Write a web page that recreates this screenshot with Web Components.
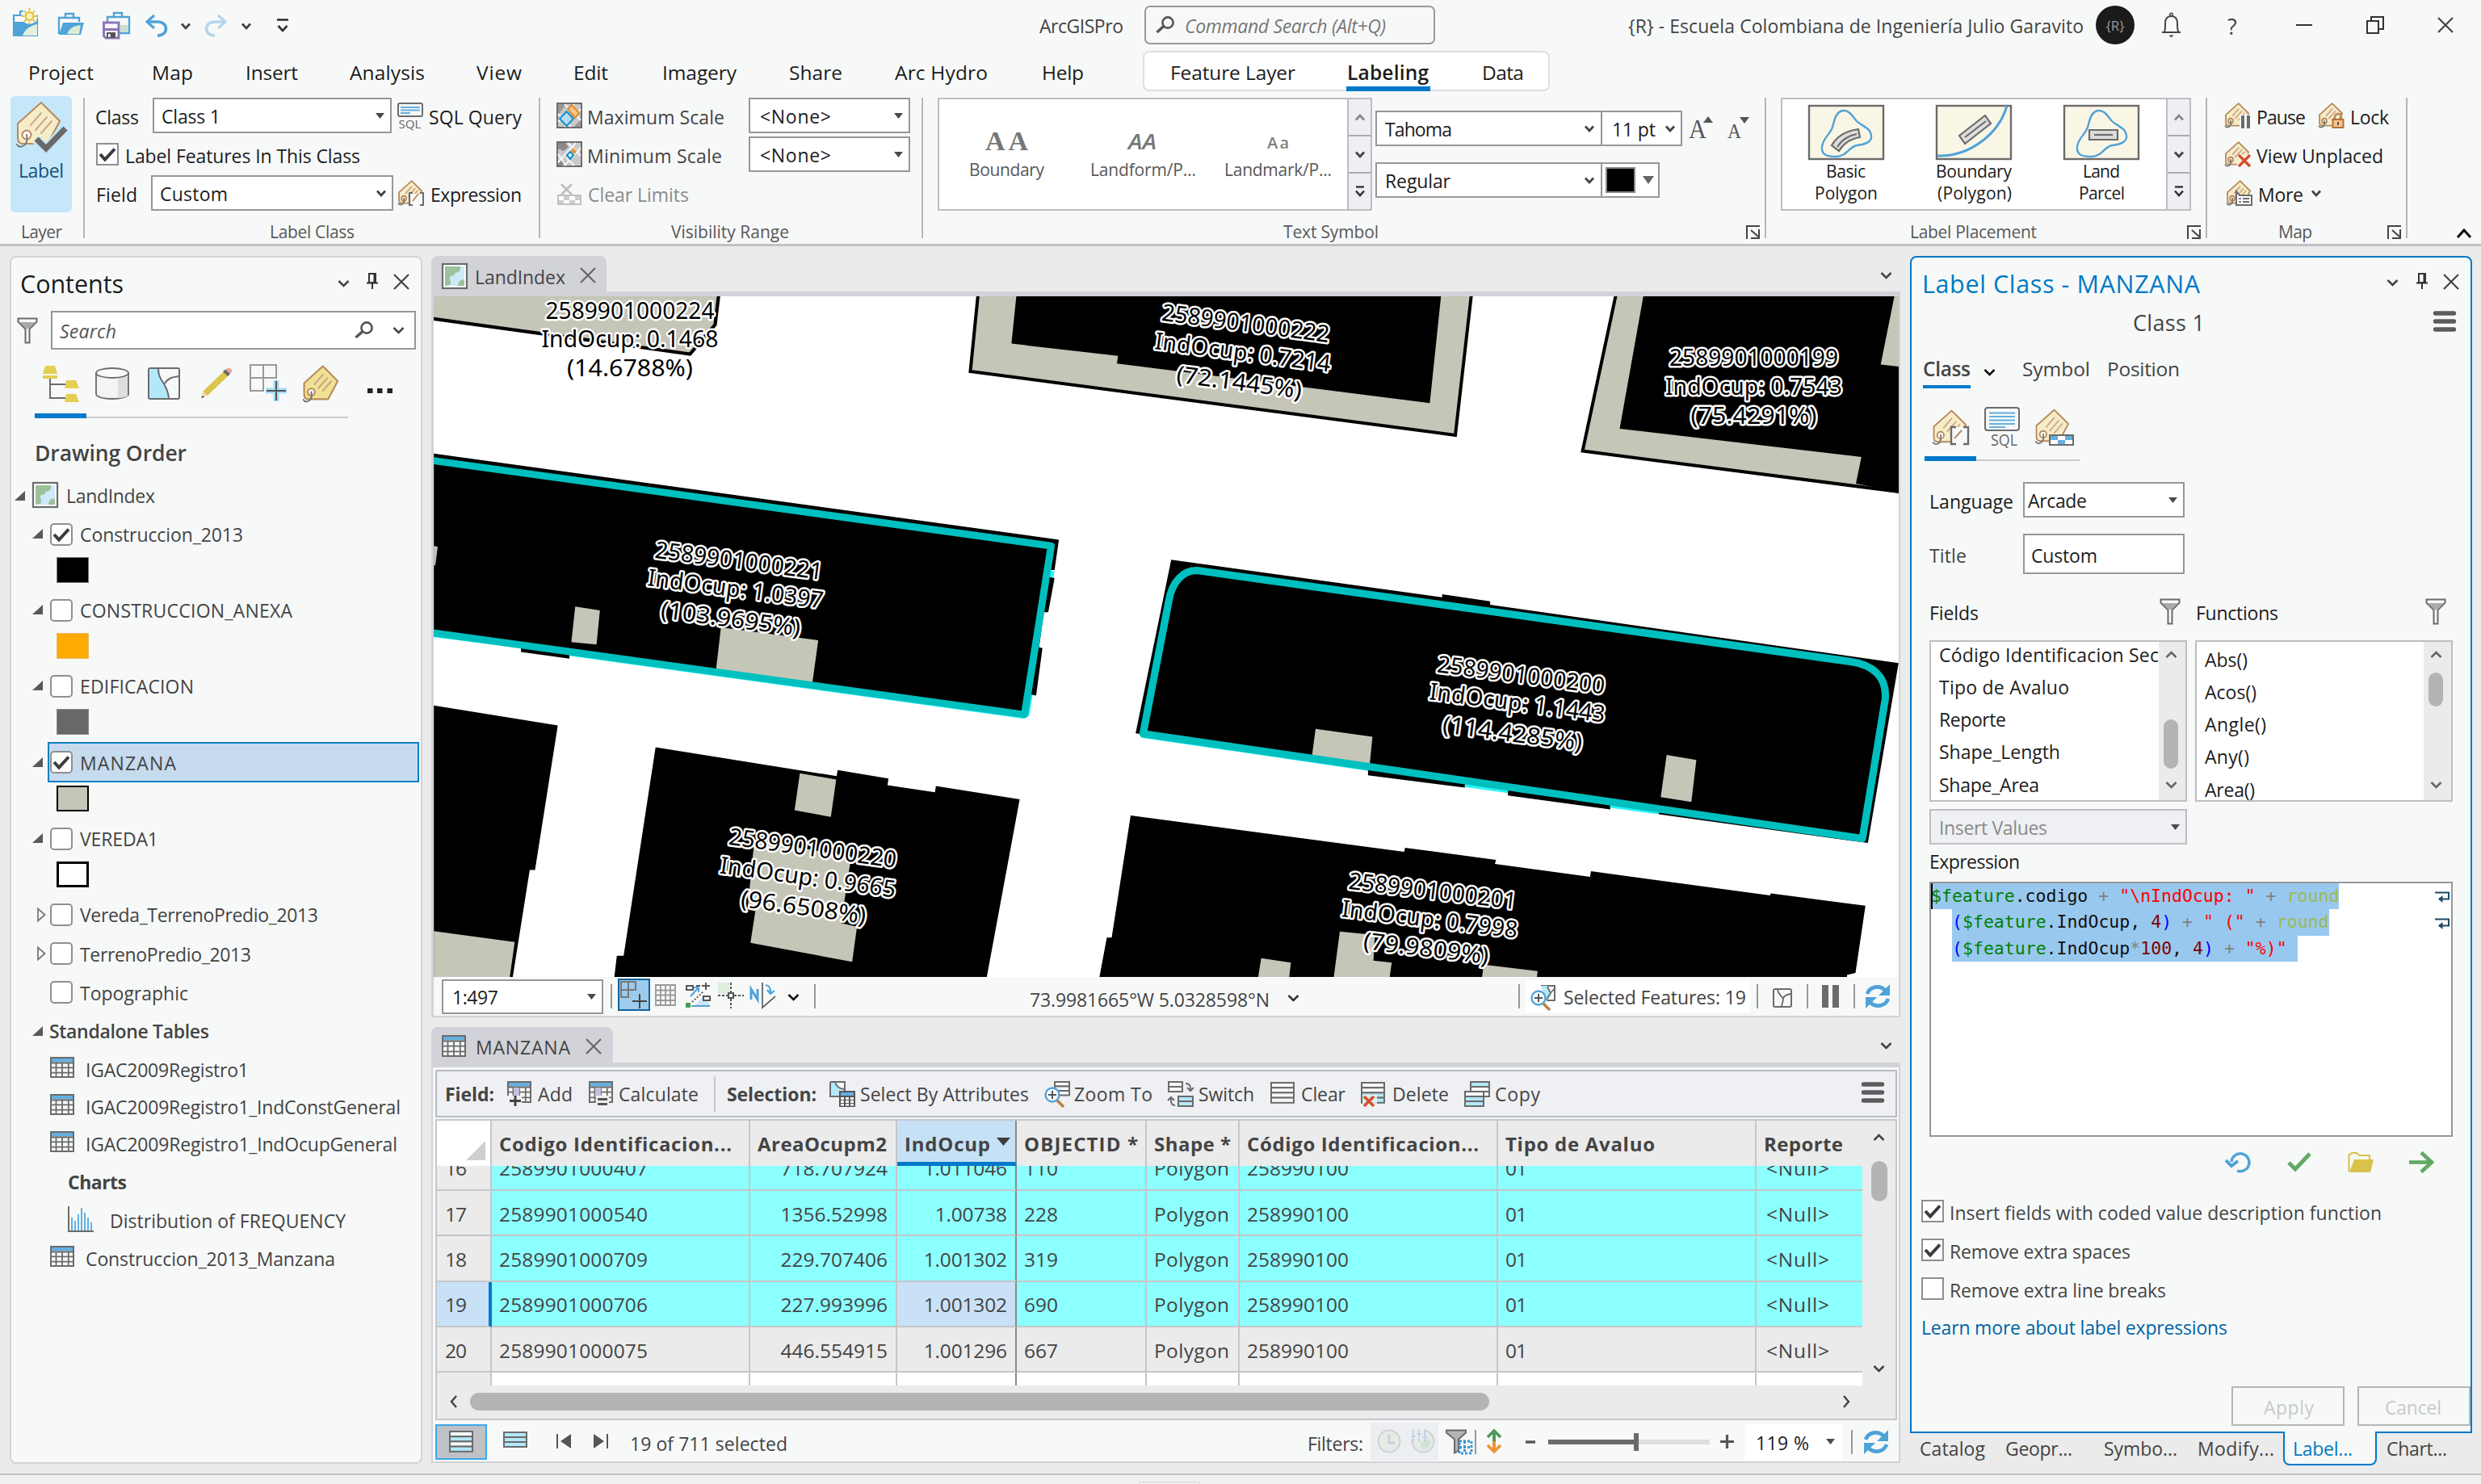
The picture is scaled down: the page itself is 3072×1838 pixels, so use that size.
<!DOCTYPE html>
<html lang="en">
<head>
<meta charset="utf-8">
<title>ArcGISPro</title>
<style>
html,body{margin:0;padding:0;width:3072px;height:1838px;overflow:hidden;background:#ebebeb}
body{font-family:"Open Sans","Noto Sans",sans-serif;font-size:23px;color:#444}
</style>
</head>
<body>
<app-window></app-window>
<script>
const G='#6b6b6b', B='#4fa3d8';
const tag=(s,sw=2,fill='#f5edc8')=>`<g transform="scale(${s})" fill="none" stroke-width="${sw}" stroke-linejoin="round" stroke-linecap="round"><path d="M31 2L54 25L39 53H9Q2 53 2 46V28Z" fill="${fill}" stroke="#b98a5c"/><path d="M18 30L31 15M24 36L38 20M31 40L44 25" stroke="#cfa888"/><circle cx="13" cy="42" r="5.5" fill="#fff" stroke="#b98a5c"/><path d="M13 42q2 9-3 13q-6 4-9-1" stroke="#777"/></g>`;
const table=(w,h)=>`<rect x="1" y="1" width="${w-2}" height="${h-2}" fill="#f7f9f9" stroke="${G}" stroke-width="2"/><rect x="2" y="2" width="${w-4}" height="4.5" fill="#64afe0"/><path d="M1 7.5H${w-1}M1 ${7+(h-7)/3}H${w-1}M1 ${7+(h-7)*2/3}H${w-1}M${w*.25} 7V${h}M${w*.5} 7V${h}M${w*.76} 7V${h}" stroke="${G}" stroke-width="1.8"/>`;
const rows=(x,y,w,n,fills,p=6.5)=>{let s='';for(let i=0;i<n;i++)s+=`<rect x="${x+1}" y="${y+1+i*p}" width="${w-2}" height="${p}" fill="${fills[i]||'#f7f9f9'}" stroke="${G}" stroke-width="2"/>`;return s};
const bag=(x)=>`<path d="M${x} 9h29v25h-29zM${x+8} 9V4h11v5" fill="none" stroke="${B}" stroke-width="2.2"/>`;
const refresh=`<g fill="none" stroke="${B}" stroke-width="4.6"><path d="M3 13C6 4 18 1 26 9"/><path d="M29 19C26 28 14 31 6 23"/></g><path d="M31 1V15H17ZM1 31V17H15Z" fill="${B}"/>`;
const funnel=`<path d="M1.5 1.5h23v4l-9 9v17h-5v-17l-9-9z" fill="#f7f9f9" stroke="${G}" stroke-width="2"/><path d="M3 6h20l-8 8h-4z" fill="#aaa"/>`;
const lens=(x,y)=>`<circle cx="${x}" cy="${y}" r="8.5" fill="#f7fbff" stroke="#4fa3d8" stroke-width="2.4"/><path d="M${x-5} ${y}h10M${x} ${y-5}v10" stroke="#555" stroke-width="2"/><path d="M${x+6} ${y+7}l8 8" stroke="#b98048" stroke-width="3.6"/>`;
const blob='M44 7C36 7 33 15 31 24C29 36 18 40 17 52C16 62 24 64 34 64C48 64 50 52 60 50C70 49 79 46 78 38C77 28 66 26 60 20C54 13 51 7 44 7Z';
const ICONS={
 chev:[15,10,`<path d="M1.5 2L7.5 8L13.5 2" fill="none" stroke="currentColor" stroke-width="2.6"/>`],
 up:[15,10,`<path d="M1.5 8L7.5 2L13.5 8" fill="none" stroke="currentColor" stroke-width="2.6"/>`],
 chevs:[12,9,`<path d="M1 1.5L6 7L11 1.5" fill="none" stroke="currentColor" stroke-width="2.8"/>`],
 ups:[12,9,`<path d="M1 7.5L6 2L11 7.5" fill="none" stroke="currentColor" stroke-width="2.8"/>`],
 left:[10,16,`<path d="M8 1L2 8L8 15" fill="none" stroke="currentColor" stroke-width="2.4"/>`],
 right:[10,16,`<path d="M2 1L8 8L2 15" fill="none" stroke="currentColor" stroke-width="2.4"/>`],
 caret:[20,12,`<path d="M2 11L10 2L18 11" fill="none" stroke="#111" stroke-width="3"/>`],
 tri:[11,7,`<path d="M0 0H11L5.5 7Z" fill="#4a4a4a"/>`],
 bigtri:[14,10,`<path d="M0 0H14L7 10Z" fill="#666"/>`],
 sort:[17,10,`<path d="M0 0H17L8.5 10Z" fill="#3c3c3c"/>`],
 bar:[14,18,`<path d="M0 1.5H14" stroke="#333" stroke-width="2.6"/><path d="M1.5 9L7 15L12.5 9" fill="none" stroke="#333" stroke-width="2.6"/>`],
 more:[12,14,`<path d="M1 1.5H11" stroke="#333" stroke-width="2.4"/><path d="M1 6.5L6 12L11 6.5" fill="none" stroke="#333" stroke-width="2.6"/>`],
 x:[20,20,`<path d="M1 1L19 19M19 1L1 19" stroke="currentColor" stroke-width="2.2"/>`],
 pin:[14,20,`<path d="M3 1H11V12H3ZM0 12.5H14M7 13V20" fill="none" stroke="#333" stroke-width="2"/><path d="M8.5 1h3v11h-3z" fill="#333"/>`],
 ham:[28,26,`<path d="M2.5 3H25.5M2.5 13H25.5M2.5 23H25.5" stroke="#5c5c5c" stroke-width="5.4" stroke-linecap="round"/>`],
 tri_open:[13,12,`<path d="M0 12L13 0V12Z" fill="#595959"/>`],
 tri_shut:[11,18,`<path d="M1 1.5V16.5L9.5 9Z" fill="none" stroke="#777" stroke-width="1.8"/>`],
 newp:[34,36,`${bag(2)}<path d="M3 17H30V34H3Z" fill="${B}"/><path d="M13 34C16 26 22 22 31 20V34Z" fill="#e4efdf"/><circle cx="21.5" cy="10" r="10" fill="#f7f9f9"/><circle cx="21.5" cy="10" r="5" fill="#fbf0b8" stroke="#dfc030" stroke-width="2.2"/><path d="M21.5 0v3M21.5 17v3M12 10h3M28 10h3M15 3.500l2 2M28 3.500l-2 2M15 16.500l2-2M28 16.500l-2-2" stroke="#dfc030" stroke-width="2"/>`],
 open:[36,30,`<path d="M2 27V7H27V12M10 7V2H20V7" fill="none" stroke="${B}" stroke-width="2.4"/><path d="M2 28L7 13H33L29 28Z" fill="${B}"/><path d="M12 27C15 20 20 17 29 16L27 27Z" fill="#dcebd8"/>`],
 save:[36,34,`<g transform="translate(4 0)"><path d="M2 27V7H29V27H14M10 7V2H20V7" fill="none" stroke="${B}" stroke-width="2.4"/><path d="M18 17h10v9h-10z" fill="#c5dfd0"/></g><path d="M1.500 14H20V33H4L1.500 30.500Z" fill="#f7f9f9" stroke="#8e76b8" stroke-width="3"/><path d="M2 24h17v-3h-17z" fill="#8e76b8"/><path d="M5 26h11v7h-11z" fill="#555"/><path d="M7 28h2.500v4h-2.500z" fill="#fff"/>`],
 undo:[28,28,`<path d="M2 9H15C29 9 29 26 15 26" fill="none" stroke="${B}" stroke-width="3.6"/><path d="M11 1L2 9L11 17" fill="none" stroke="${B}" stroke-width="3.2"/>`],
 redo:[28,28,`<path d="M26 9H13C-1 9-1 26 13 26" fill="none" stroke="#b4d6ec" stroke-width="3.6"/><path d="M17 1L26 9L17 17" fill="none" stroke="#b4d6ec" stroke-width="3.2"/>`],
 magb:[24,22,`<circle cx="15" cy="8" r="6.600" fill="none" stroke="#555" stroke-width="2.6"/><path d="M10.500 12L1.500 20" stroke="#555" stroke-width="3.4"/>`],
 bell:[27,32,`<path d="M2 25H25M5 25C6 22 6 18 6 14C6 8 9 5 13.500 5S21 8 21 14C21 18 21 22 22.500 25" fill="none" stroke="#444" stroke-width="2"/><circle cx="13.500" cy="3" r="1.800" fill="none" stroke="#444" stroke-width="1.500"/><path d="M10.500 28.500h6l-3 3z" fill="#444"/>`],
 min:[20,4,`<path d="M0 2H20" stroke="#333" stroke-width="2"/>`],
 rest:[22,22,`<path d="M1 6H15V21H1ZM6 6V1H21V16H15" fill="none" stroke="#333" stroke-width="2"/>`],
 taglabel:[64,64,`${tag(1,2)}<path d="M25 48L37 60L60 34" fill="none" stroke="#c4e7f9" stroke-width="12"/><path d="M25 47L37 59L61 34" fill="none" stroke="#696969" stroke-width="7"/>`],
 tag:[44,46,tag(.8,2.6,'#f0e294')],
 sql:[32,32,`<rect x="1" y="1" width="30" height="16" rx="2" fill="#f7f9f9" stroke="${G}" stroke-width="2"/><path d="M4 6H28M4 9.500H28M4 13H16" stroke="#64afe0" stroke-width="2"/><text x="1.500" y="31.500" font-size="14.500" font-family="Open Sans" fill="#666" textLength="28" lengthAdjust="spacingAndGlyphs">SQL</text>`],
 sqlb:[44,50,`<rect x="1" y="1" width="42" height="28" rx="3" fill="#f7f9f9" stroke="${G}" stroke-width="2"/><path d="M6 7.500H38M6 12H38M6 16.500H38M6 21H38M6 25H26" stroke="#64afe0" stroke-width="2.200"/><text x="8" y="48" font-size="20" font-family="Open Sans" fill="#666" textLength="33" lengthAdjust="spacingAndGlyphs">SQL</text>`],
 expr:[32,32,`${tag(.54,3.4)}<path d="M15 17h17v15h-17z" fill="#f7f9f9"/><path d="M18 16H14V31H18M27 16H31V31H27" fill="none" stroke="${G}" stroke-width="2"/><path d="M18 26L25 17" stroke="#b98a5c" stroke-width="1.8"/>`],
 exprb:[46,48,`${tag(.76,2.400)}<path d="M22 22h24v22h-24z" fill="#f7f9f9"/><path d="M29 22H23V43H29M38 22H44V43H38" fill="none" stroke="${G}" stroke-width="2.400"/><path d="M27 36L36 26" stroke="#b98a5c" stroke-width="2"/>`],
 tagtab:[48,48,`${tag(.76,2.400)}<rect x="18" y="33" width="29" height="12" fill="#fff" stroke="${G}" stroke-width="2"/><path d="M19 34h9v5h-9zM37 34h9v5h-9zM28 39h9v5h-9z" fill="#64afe0"/>`],
 maxs:[32,32,`<rect x="1" y="1" width="30" height="30" fill="#c9c9c9" stroke="${G}" stroke-width="2"/><path d="M2 2h10l-10 14zM22 30l8-9v9z" fill="#999"/><path d="M2 14L18 30M10 2L30 22M2 24L22 2M30 8L10 30" stroke="#f3f3f3" stroke-width="2.400"/><path d="M12.500 11L21 20L12.500 29L4 20Z" fill="#b5dcf2" stroke="#1390cc" stroke-width="2"/><path d="M19 3L28 13L23 19L14 8Z" fill="#f7c48b" stroke="#e08a2c" stroke-width="2"/>`],
 mins:[32,32,`<rect x="1" y="1" width="30" height="30" fill="#c9c9c9" stroke="${G}" stroke-width="2"/><path d="M2 2h9l4 5-6 5-7-3zM5 22l7 3-5 5h-5z" fill="#8a8a8a"/><path d="M2 16L12 30M14 2L30 18M2 26L24 2M30 8L10 30M22 30L12 20" stroke="#f3f3f3" stroke-width="2.400"/><path d="M17 13L21 17L17 22L13 17Z" fill="#fff" stroke="#1390cc" stroke-width="2.200"/><path d="M20 8l5 4-2 4-5-4z" fill="#e8963c"/>`],
 clr:[30,27,`<path d="M5 1L18 14M18 1L5 14" stroke="#c0c0c0" stroke-width="3"/><rect x="1" y="15" width="28" height="11" fill="#fff" stroke="#c0c0c0" stroke-width="2"/><path d="M8 16h7v5h-7zM22 16h6v5h-6zM2 21h6v4h-6zM15 21h7v4h-7z" fill="#ccc"/>`],
 launch:[18,17,`<path d="M1 17V1H17" fill="none" stroke="#444" stroke-width="2"/><path d="M6 6L15 14M16 5V16H6" fill="none" stroke="#444" stroke-width="2"/>`],
 AAb:[56,26,`<text x="1" y="25" font-family="Liberation Serif" font-weight="bold" font-size="34" fill="#777" textLength="53">A A</text>`],
 AAi:[36,22,`<text x="0" y="21" font-family="Open Sans" font-style="italic" font-weight="600" font-size="27" fill="#777" textLength="35" lengthAdjust="spacingAndGlyphs">AA</text>`],
 Aas:[30,18,`<text x="1" y="17" font-family="Open Sans" font-weight="600" font-size="20" fill="#808080" textLength="27">Aa</text>`],
 grow:[32,30,`<text x="0" y="29" font-family="Liberation Serif" font-size="33" fill="#555" textLength="22" lengthAdjust="spacingAndGlyphs">A</text><path d="M18 10H30L24 2Z" fill="#555"/>`],
 shrink:[28,30,`<text x="0" y="29" font-family="Liberation Serif" font-size="25" fill="#555" textLength="17" lengthAdjust="spacingAndGlyphs">A</text><path d="M15 3H27L21 11Z" fill="#555"/>`],
 pl1:[94,68,`<rect x="1" y="1" width="92" height="66" fill="#faf6e6" stroke="${G}" stroke-width="2.400"/><path d="${blob}" fill="none" stroke="${B}" stroke-width="2.400"/><path d="M29 50C36 38 46 32 62 30L64 40C52 42 44 47 38 57Z" fill="#dcdcdc" stroke="${G}" stroke-width="2.200"/><path d="M36 52C42 43 49 38 60 36" fill="none" stroke="${G}" stroke-width="2.200"/>`],
 pl2:[94,68,`<rect x="1" y="1" width="92" height="66" fill="#faf6e6" stroke="${G}" stroke-width="2.400"/><path d="M88 1C78 36 42 64 2 63" fill="none" stroke="${B}" stroke-width="3"/><path d="M29 38L61 13L68 23L36 48Z" fill="#dcdcdc" stroke="${G}" stroke-width="2.200"/><path d="M36 40L62 20" stroke="${G}" stroke-width="2.200"/>`],
 pl3:[94,68,`<rect x="1" y="1" width="92" height="66" fill="#faf6e6" stroke="${G}" stroke-width="2.400"/><path d="${blob}" fill="none" stroke="${B}" stroke-width="2.400"/><path d="M32 31H67V43H32Z" fill="#dcdcdc" stroke="${G}" stroke-width="2.200"/><path d="M38 37H61" stroke="${G}" stroke-width="2.200"/>`],
 pause:[32,32,`${tag(.54,3.400)}<path d="M18 15h14v17h-14z" fill="#f7f9f9"/><path d="M22 16V32M29 16V32" stroke="${G}" stroke-width="4"/>`],
 lock:[32,32,`${tag(.54,3.400)}<path d="M20 22v-4q0-4 4-4t4 4v4" fill="none" stroke="#b98a5c" stroke-width="2.400"/><rect x="17.500" y="21" width="13" height="10" fill="#f7c48b" stroke="#b5713a" stroke-width="2"/><path d="M24 24v4" stroke="#555" stroke-width="2"/>`],
 unpl:[32,32,`${tag(.54,3.400)}<path d="M17 17L31 31M31 17L17 31" stroke="#f7f9f9" stroke-width="7"/><path d="M17 17L31 31M31 17L17 31" stroke="#d2502a" stroke-width="3.400"/>`],
 morel:[32,32,`${tag(.54,3.400)}<path d="M12 14L16 19H31V31H12Z" fill="#fff" stroke="${G}" stroke-width="2"/><path d="M15 23h3M15 27h3" stroke="#8e76b8" stroke-width="2"/><path d="M20 23h8M20 27h8" stroke="${G}" stroke-width="2"/>`],
 funnel:[26,33,funnel],
 tree:[46,46,`<path d="M9 16V40H28M9 23H28" fill="none" stroke="${G}" stroke-width="2"/><path d="M3 0h12l3 10h-18zM0 12h18v4h-18zM29 18h12l4 10h-18zM29 35h12l4 10h-18z" fill="#e3cf50"/>`],
 cyl:[42,40,`<path d="M1 7V33C1 41 41 41 41 33V7" fill="#f4f4f4" stroke="${G}" stroke-width="1.800"/><path d="M28 12h12v24q-5 2-12 2z" fill="#dedede"/><ellipse cx="21" cy="7" rx="20" ry="6" fill="#fafafa" stroke="${G}" stroke-width="1.800"/>`],
 selm:[40,40,`<rect x="1" y="1" width="38" height="38" rx="2" fill="#f7f9f9" stroke="${G}" stroke-width="2"/><path d="M2 2H13C13 18 24 18 26 38H2Z" fill="#b3e8f9"/><path d="M13 2C13 18 24 18 26 38M21 20C26 12 32 12 39 11" fill="none" stroke="${G}" stroke-width="2"/>`],
 pencil:[40,40,`<path d="M3 30L30 4L36 9L9 35Z" fill="#dcc54c"/><path d="M3 30L1 38L9 35Z" fill="#f5d8b8"/><path d="M1 38l2-3 2 2z" fill="#444"/><path d="M28 5L32 2L37 8L34 11Z" fill="#666"/><path d="M31 3Q35-1 38 2T37 8Z" fill="#e8a598"/>`],
 gridp:[48,48,`<path d="M1 1H33V17H17V33H1ZM17 1V17H1" fill="none" stroke="#999" stroke-width="2"/><path d="M33 20V46M20 33H46" stroke="#a8dcf8" stroke-width="7"/><path d="M33 21V45M21 33H45" stroke="#555" stroke-width="2"/>`],
 dots:[32,8,`<path d="M0 1h6.500v6h-6.500zM12 1h6.500v6h-6.500zM24.500 1h6.500v6h-6.500z" fill="#222"/>`],
 map:[32,32,`<rect x="1" y="1" width="30" height="30" fill="#fff" stroke="${G}" stroke-width="2.200"/><rect x="4" y="4" width="24" height="24" fill="#cfe8fa"/><path d="M4 4H23C24 9 21 12 16 12C17 17 12 14 10 17C9 21 13 22 10 27L4 28ZM20 28C20 23 24 19 28 21V28Z" fill="#9bc29b"/>`],
 table:[30,26,table(30,26)],
 tableb:[30,27,table(30,27)],
 hist:[32,32,`<path d="M1 0V31H32" fill="none" stroke="${G}" stroke-width="2"/><path d="M5 14V30M9 18V30M13 10V30M17 2V30M21 8V30M25 14V30M29 20V30" stroke="#64afe0" stroke-width="2"/>`],
 snap:[36,36,`<path d="M2 2H20V12H11V21H2ZM11 2V12H2" fill="none" stroke="#777" stroke-width="2"/><path d="M25 17V35M16 26H34" stroke="#444" stroke-width="2"/>`],
 grid:[26,27,`<path d="M1 1H25V26H1ZM7 1V26M13 1V26M19 1V26M1 7.500H25M1 13.500H25M1 20H25" fill="none" stroke="#999" stroke-width="1.800"/>`],
 inf:[33,32,`<path d="M12 28L24 14L31 30Z" fill="#cfe6f6"/><path d="M1 4h8v5h-8zM22 17h8v5h-8z" fill="#fff" stroke="#555" stroke-width="2"/><path d="M13 4h5M20 4h10M25 0v9" stroke="#555" stroke-width="2"/><path d="M6 17L16 6M16 6h-6M16 6v6" stroke="${B}" stroke-width="2" fill="none"/><path d="M7 29H30" stroke="${B}" stroke-width="2"/><path d="M0 25h6v6h-6z" fill="#4b9a56"/><path d="M8 24L22 11" stroke="#555" stroke-width="2" stroke-dasharray="2 2"/>`],
 cross:[32,32,`<path d="M0 0h14v14h-14z" fill="#dcefdc"/><path d="M16 0V32M0 16H32" stroke="#555" stroke-width="2" stroke-dasharray="3 2"/><rect x="13" y="13" width="6" height="6" fill="#fff" stroke="#555" stroke-width="2"/>`],
 north:[34,32,`<path d="M2 21V8L10 21V8" fill="none" stroke="${B}" stroke-width="3"/><path d="M16 0V31L32 17" fill="none" stroke="#666" stroke-width="1.800"/><path d="M20 3Q27 4 26 13M22 9L26 14L31 10" fill="none" stroke="${B}" stroke-width="2.200"/>`],
 zsel:[32,32,`<path d="M13 2H30V20H20" fill="#fff" stroke="${G}" stroke-width="2"/><path d="M13 2h8l5 12-6 6z" fill="#b3e8f9"/><path d="M21 3l4 8-5 8M25 11l5-6" fill="none" stroke="${G}" stroke-width="1.800"/>${lens(10,17)}`],
 box:[24,24,`<rect x="1" y="1" width="22" height="22" rx="2" fill="none" stroke="${G}" stroke-width="2"/><path d="M6 2C7 9 13 10 13 14L11 22M13 12Q15 8 22 7" fill="none" stroke="${G}" stroke-width="1.800"/>`],
 pp:[23,28,`<path d="M5 0V28M18 0V28" stroke="${G}" stroke-width="8"/>`],
 refresh:[32,32,refresh],
 fadd:[31,31,`${table(30,27)}<path d="M8 8h7v12h-7z" fill="#c9bfdd"/><path d="M0 18h18v13h-18z" fill="#eff0f3"/><path d="M10 18V31M3 24.500H17" stroke="#444" stroke-width="3"/>`],
 fcalc:[31,31,`${table(30,27)}<path d="M8 8h7v12h-7z" fill="#c9bfdd"/><path d="M9 18h16v13h-16z" fill="#eff0f3"/><path d="M11 22.500H23M11 28.500H23" stroke="#555" stroke-width="3"/>`],
 sba:[33,32,`<path d="M1 1H19V12M1 1V19H12" fill="#f7f9f9" stroke="${G}" stroke-width="2"/><path d="M2 2h6l5 9v7h-11z" fill="#b3e8f9"/><path d="M7 1Q9 9 18 10" fill="none" stroke="${G}" stroke-width="1.800"/><g transform="translate(12 12)"><rect x="0" y="0" width="20" height="20" fill="#555"/><path d="M2 2h16v4h-16z" fill="#64afe0"/><path d="M2 8h4v3h-4zM8 8h4v3h-4zM14 8h4v3h-4zM2 12h4v3h-4zM8 12h4v3h-4zM14 12h4v3h-4zM2 16h4v2.500h-4zM8 16h4v2.500h-4zM14 16h4v2.500h-4z" fill="#fff"/></g>`],
 zt:[33,32,`${rows(12,0,20,3,[],5.500)}${lens(10,17)}`],
 sw:[33,32,`${rows(0,0,19,2,[],6)}${rows(12,18,20,2,['#b3e8f9','#b3e8f9'],6)}<path d="M22 3Q29 3 28 11M24 8L28 12L32 8M9 30Q3 30 4 21M0 24L4 20L8 24" fill="none" stroke="${G}" stroke-width="2"/>`],
 cl:[30,27,rows(0,0,30,4,[],6.200)],
 del:[30,30,`${rows(0,0,30,4,['','','#b3e8f9','#b3e8f9'],6.200)}<path d="M2 16h18v15h-18z" fill="#eff0f3" opacity=".85"/><path d="M4 18L16 30M16 18L4 30" stroke="#d2502a" stroke-width="3.400"/>`],
 cp:[33,32,`${rows(7,0,25,3,['#b3e8f9','#f7f9f9','#f7f9f9'],6)}${rows(0,12,25,3,['#f7f9f9','#b3e8f9','#b3e8f9'],6)}`],
 all:[30,27,rows(0,0,30,4,['#f7f9f9','#b3e8f9','#f7f9f9','#b3e8f9'],6.200)],
 sel:[30,20,rows(0,0,30,3,['#b3e8f9','#b3e8f9','#b3e8f9'],6)],
 first:[19,18,`<path d="M1 0V18" stroke="#555" stroke-width="2"/><path d="M18 0V18L5 9Z" fill="#555"/>`],
 last:[19,18,`<path d="M18 0V18" stroke="#555" stroke-width="2"/><path d="M1 0V18L14 9Z" fill="#555"/>`],
 clock:[30,30,`<circle cx="15" cy="15" r="13.500" fill="#e6ebe6" stroke="#d0d2d6" stroke-width="2"/><path d="M15 7V17H22" fill="none" stroke="#c0cdd8" stroke-width="2.400"/>`],
 range:[30,30,`<circle cx="15" cy="15" r="13.500" fill="#e6ebe6" stroke="#d0d2d6" stroke-width="2"/><path d="M16 14q8-4 9 3q-4 9-12 8q-4-6 3-11z" fill="#d3e2d3"/><path d="M-1 -1h19v13h-19z" fill="#eceef2"/><path d="M3 0V16M10 0V16M17 0V16M0 9h6M7 6h6M14 10h6" stroke="#c3d4e4" stroke-width="2"/>`],
 fsel:[33,31,`<path d="M1 1.500h24v3l-9 8v14l-5 3v-17l-10-8z" fill="#b5b5b5" stroke="${G}" stroke-width="2"/><rect x="17" y="15" width="15" height="15" fill="#f7f9f9" stroke="#3a96d2" stroke-width="3" stroke-dasharray="3 2"/><path d="M23.500 15v15M17 22.500h15" stroke="#3a96d2" stroke-width="3" stroke-dasharray="3 2"/>`],
 ud:[18,30,`<path d="M9 3V15" stroke="#4b9a56" stroke-width="4"/><path d="M1 10L9 2L17 10" fill="none" stroke="#4b9a56" stroke-width="3.600"/><path d="M9 15V27" stroke="#ef9433" stroke-width="4"/><path d="M1 20L9 28L17 20" fill="none" stroke="#ef9433" stroke-width="3.600"/>`],
 minus:[12,4,`<path d="M0 2H12" stroke="#555" stroke-width="3.400"/>`],
 plus:[17,17,`<path d="M0 8.500H17M8.500 0V17" stroke="#555" stroke-width="3.200"/>`],
 slider:[200,22,`<path d="M0 11H110" stroke="#6a6a6a" stroke-width="6"/><path d="M110 11H200" stroke="#dcdedf" stroke-width="6"/><path d="M109 0V22" stroke="#6a6a6a" stroke-width="6"/>`],
 corner:[24,24,`<path d="M24 24V0L0 24Z" fill="#cfcfcf"/>`],
 wrap:[18,15,`<path d="M0 1.500H17V9.500H5" fill="none" stroke="#1d4a66" stroke-width="2"/><path d="M4 9.500L9.500 5V14Z" fill="#1d4a66"/>`],
 revert:[32,28,`<path d="M8 14A11 11 0 1 1 15 25" fill="none" stroke="${B}" stroke-width="3.400"/><path d="M1 12L8 19L16 13" fill="none" stroke="${B}" stroke-width="4"/>`],
 ok:[30,26,`<path d="M2 14L10 22L28 3" fill="none" stroke="#62a862" stroke-width="4.800"/>`],
 folder:[32,26,`<path d="M1.500 24V3.500L5 1H11L14 4H27V9" fill="none" stroke="#d9c24a" stroke-width="2.200"/><path d="M2 25L8 9H32L28 25Z" fill="#d9c24a"/>`],
 go:[32,27,`<path d="M0 13.500H28M15 1.500L28 13.500L15 25.500" fill="none" stroke="#62a862" stroke-width="4.600"/>`],
 check:[28,28,`<path d="M5 14L11 20.500L23 7.500" fill="none" stroke="#3c3c3c" stroke-width="4"/>`]
};

const BASE=`*{box-sizing:border-box}:host{display:block;box-sizing:border-box}
.s{display:flex;flex-direction:column;flex:none}
.r{display:flex;align-items:center;flex:none}
.r>div{flex:none}
.b{font-weight:700}.sb{font-weight:600}.i{font-style:italic}
.k{color:#1c1c1c}.g{color:#585858}`;

/* Vertical stack of rows. x0,y0 is the origin of the stack on the page; every row is
   [top, bottom, cells] and every cell is [left, width, markup, vertical nudge]. */
const S=(x0,y0,list)=>{let y=y0;return '<div class="s">'+list.map(([a,b,cells,st])=>{const m=a-y;y=b;let x=x0;
  return `<div class="r" style="margin-top:${m}px;height:${b-a}px;${st||''}">`+cells.map(([ix,iw,h,d])=>{const g=ix-x;x=ix+iw;
    return `<div style="margin-left:${g}px;width:${iw}px;${d?`margin-top:${2*d}px`:''}">${h}</div>`}).join('')+'</div>'}).join('')+'</div>'};
const esc=t=>t.replace(/&/g,'&amp;').replace(/</g,'&lt;').replace(/>/g,'&gt;');
const F=(w,t,c='',st='')=>`<fit-text class="${c}" w="${w}" style="${st}">${esc(t)}</fit-text>`;
const T=(a,b,t,c='',st='',d=0)=>[a-1,b-a+2,F(b-a+2,t,c,st),d];
const I=(x,n,d=0,st='')=>[x,ICONS[n][0],`<ui-icon name="${n}" style="${st}"></ui-icon>`,d];
const V=(x,h,c='#b4b6ba',w=2)=>[x-1,w,`<div style="width:${w}px;height:${h}px;background:${c}"></div>`];
const C=(a,b,h,ta,tb,t,arrow,ax,c='k',st='',d=1)=>[a,b-a,`<ui-combo style="height:${h}px;${st}">${S(a+2,0,[[0,h-4,[T(ta,tb,t,c,'',d),I(ax,arrow)]]])}</ui-combo>`];

const define=(name,css,render)=>customElements.define(name,class extends HTMLElement{
  constructor(){super();this.attachShadow({mode:'open'})}
  connectedCallback(){this.shadowRoot.innerHTML=`<style>${BASE}${css}</style>${render(this)}`}
});

customElements.define('fit-text',class extends HTMLElement{
  constructor(){super();this.attachShadow({mode:'open'});
    this.shadowRoot.innerHTML='<style>:host{display:block;white-space:nowrap}span{display:inline-block;vertical-align:top}</style><span><slot></slot></span>'}
  connectedCallback(){const w=+this.getAttribute('w'),n=this.textContent.length,s=this.shadowRoot.querySelector('span');
    if(w&&n>1){const d=(w-s.getBoundingClientRect().width)/(n-1);s.style.letterSpacing=d.toFixed(3)+'px';s.style.marginRight=(-d).toFixed(3)+'px'}}
});
define('ui-icon','svg{display:block;overflow:visible}',e=>{const [w,h,s]=ICONS[e.getAttribute('name')];return `<svg width="${w}" height="${h}" viewBox="0 0 ${w} ${h}">${s}</svg>`});
define('ui-combo',':host{background:#fff;border:2px solid #979797;color:#444}',()=>'<slot></slot>');
define('ui-check',':host{width:28px;height:28px;background:#fff;border:2px solid #8f8f8f}:host([round]){border-radius:5px}ui-icon{margin:-2px}',e=>e.hasAttribute('on')?'<ui-icon name="check"></ui-icon>':'');
const K=(x,on,round='',d=0)=>[x,28,`<ui-check ${on?'on':''} ${round}></ui-check>`,d];

define('title-bar',`:host{height:63px}.box{height:48px;border:2px solid #9a9a9a;border-radius:7px}.av{width:48px;height:48px;border-radius:50%;background:#1b1b1b;color:#999;display:flex;align-items:center;justify-content:center;font-size:17px}`,()=>
 S(0,0,[[0,62,[I(15,'newp',-3),I(71,'open',-1),I(127,'save',0),I(180,'undo',1),I(224,'chevs',1),I(253,'redo',1),I(299,'chevs',1),I(343,'bar',1),
  T(1288,1390,'ArcGISPro','','',1),[1417,360,`<div class="box">${S(1419,0,[[0,44,[I(1431,'magb'),T(1468,1715,'Command Search (Alt+Q)','i','color:#777',1)]]])}</div>`],
  T(2017,2579,'{R} - Escuela Colombiana de Ingeniería Julio Garavito','','',1),
  [2595,48,'<div class="av">{R}</div>'],I(2675,'bell'),T(2759,2771,'?','','font-size:27px',1),I(2843,'min'),I(2930,'rest'),I(3018,'x')]]]));

define('ribbon-tabs',`:host{height:50px;color:#1c1c1c;font-size:24.5px}.ctx{height:50px;background:#fff;border:2px solid #dedfe1;border-radius:8px}.u{height:6px;background:#0079ca}`,()=>
 S(0,0,[[0,50,[...[[36,115,'Project'],[189,238,'Map'],[305,368,'Insert'],[434,525,'Analysis'],[591,645,'View'],[711,752,'Edit'],[821,911,'Imagery'],[978,1042,'Share'],[1109,1222,'Arc Hydro'],[1291,1341,'Help']].map(([a,b,t])=>T(a,b,t,'','',1.5)),
 [1415,504,`<div class="ctx">${S(1417,65,[[65,107,[T(1450,1603,'Feature Layer','','',3.5),T(1669,1768,'Labeling','sb','',3.5),T(1836,1886,'Data','','',3.5)]],[107,113,[[1667,104,'<div class="u"></div>']]]])}</div>`]]]]));

define('ribbon-bar',`:host{display:flex;height:189px;padding-top:8px;border-bottom:3px solid #c2c2c6;color:#444}
.grp{height:174px;border-right:2px solid #b4b6ba;flex:none;box-sizing:border-box}
.lab{height:144px;background:#c4e7f9;border-radius:6px}
.gal{height:140px;border:2px solid #bcbec4;background:#fff;display:flex}
.sc{border-left:2px solid #bcbec4;background:#eeeff3;width:29px;flex:none}
.sc div{height:46px;display:flex;align-items:center;justify-content:center;border-bottom:2px solid #a9abb2}.sc div:last-child{border:0;height:44px}
.sw{width:37px;height:32px;background:#000;border:2px solid #888}.cc{height:44px;border:2px solid #979797;background:#fff}`,()=>{
 const sc='<div class="sc"><div><ui-icon name="ups" style="color:#888"></ui-icon></div><div><ui-icon name="chevs"></ui-icon></div><div><ui-icon name="more"></ui-icon></div></div>';
 const gt='font-size:21px';
 const foot=(a,b,t,lx)=>[275,299,[T(a,b,t,'g',gt,-.5),...(lx?[I(lx,'launch')]:[])]];
 const grp=(x0,x1,rows)=>`<div class="grp" style="width:${x1-x0}px">${S(x0,121,rows)}</div>`;
 return grp(0,105,[[119,263,[[13,76,`<div class="lab">${S(13,119,[[124,190,[I(20,'taglabel')]],[195,227,[T(24,78,'Label','','color:#1a4f7c',-.5)]]])}</div>`]]],foot(27,76,'Layer')])
 +grp(105,669,[
  [121,165,[T(119,171,'Class','k','',1.5),C(189,485,44,201,272,'Class 1','tri',465),I(492,'sql'),T(532,645,'SQL Query','k','',1.5)]],
  [175,209,[K(119,1,'',-1),T(156,445,'Label Features In This Class','k','',1)]],
  [217,261,[T(120,169,'Field','k','',1.5),C(187,487,44,199,281,'Custom','chevs',466),I(493,'expr'),T(534,645,'Expression','k','',1.5)]],foot(335,438,'Label Class')])
 +grp(669,1143,[
  [121,165,[I(689,'maxs'),T(728,896,'Maximum Scale','','',1.5),C(927,1127,44,942,1028,'<None>','tri',1107)]],
  [169,213,[I(689,'mins'),T(728,893,'Minimum Scale','','',1.5),C(927,1127,44,942,1028,'<None>','tri',1107)]],
  [219,263,[I(690,'clr',-1),T(729,852,'Clear Limits','','color:#8a8a8a')]],foot(832,976,'Visibility Range')])
 +grp(1143,2187,[
  [121,261,[[1161,538,`<div class="gal"><div style="flex:1">${S(1163,123,[[155,190,[I(1219,'AAb',1),I(1397,'AAi',2),I(1568,'Aas',3)]],[195,225,[T(1201,1292,'Boundary','g',gt),T(1351,1480,'Landform/P...','g',gt),T(1517,1648,'Landmark/P...','g',gt)]]])}</div>${sc}</div>`],
   [1703,480,S(1703,121,[[137,181,[C(1703,1984,44,1716,1797,'Tahoma','chevs',1962),C(1982,2083,44,1997,2049,'11 pt','chevs',2062),I(2091,'grow',-2),I(2139,'shrink',-2)]],
    [201,245,[C(1703,1984,44,1716,1795,'Regular','chevs',1962),[1982,73,`<div class="cc">${S(1984,0,[[0,40,[[1988,37,'<div class="sw"></div>'],I(2034,'bigtri')]]])}</div>`]]],[245,261,[]]])]]],
  foot(1590,1706,'Text Symbol',2162)])
 +grp(2187,2733,[
  [121,261,[[2205,508,`<div class="gal"><div style="flex:1">${S(2207,123,[[130,198,[I(2239,'pl1'),I(2397,'pl2'),I(2555,'pl3')]],[198,226,[T(2262,2309,'Basic','k',gt),T(2398,2490,'Boundary','k',gt),T(2580,2624,'Land','k',gt)]],[226,252,[T(2248,2324,'Polygon','k',gt),T(2400,2490,'(Polygon)','k',gt),T(2575,2630,'Parcel','k',gt)]]])}</div>${sc}</div>`]]],
  foot(2366,2521,'Label Placement',2708)])
 +grp(2733,2981,[
  [121,165,[I(2755,'pause'),T(2795,2854,'Pause','k','',1.5),I(2871,'lock'),T(2911,2957,'Lock','k','',1.5)]],
  [169,213,[I(2755,'unpl'),T(2795,2950,'View Unplaced','k','',1.5)]],
  [217,261,[I(2757,'morel'),T(2797,2851,'More','k','',1.5),I(2862,'chevs')]],foot(2822,2862,'Map',2956)])
 +S(2981,121,[[121,279,[]],[279,299,[I(3041,'caret')]]])});

define('contents-pane',`:host{width:511px;height:1496px;background:#f7f9f9;border:2px solid #d2d3d8;border-radius:8px}
.sr{height:48px;border:2px solid #979797;background:#fff}.sel{height:50px;background:#c6dbee;border:2px solid #0f7fc4}`,()=>{
 const item=(y,a,b,t,on)=>[y-25,y+25,[I(40,'tri_open',-1),K(62,on,'round'),T(a,b,t)]];
 const sw=(y,c,st='')=>[y,y+32,[[70,40,`<div style="height:32px;background:${c};${st}"></div>`]]];
 const tb=(y,b,t)=>[y-20,y+20,[I(62,'table',-3),T(107,b,t,'','',-.5)]];
 return S(14,319,[
  [330,374,[T(26,152,'Contents','k','font-size:30.5px',-1),I(418,'chev',-1),I(454,'pin',-4),I(487,'x',-3)]],
  [385,433,[I(21,'funnel'),[63,452,`<div class="sr">${S(65,0,[[0,44,[T(75,143,'Search','i','color:#555',.5),I(439,'magb'),I(486,'chev')]]])}</div>`]]],
  [450,502,[I(53,'tree',0),I(118,'cyl',-1),I(183,'selm',-1),I(248,'pencil',-1),I(309,'gridp',-1),I(375,'tag',-1),I(455,'dots',8)]],
  [512,518,[[43,64,'<div style="height:6px;background:#0079ca"></div>'],[107,324,'<div style="height:2px;background:#cbcbcb"></div>',2]]],
  [538,584,[T(44,230,'Drawing Order','sb','font-size:26.5px',-.5)]],
  [594,634,[I(18,'tri_open'),I(40,'map',-1),T(83,191,'LandIndex')]],
  item(662,100,300,'Construccion_2013',1),sw(690,'#000','border:1px solid #777'),
  item(756,100,361,'CONSTRUCCION_ANEXA'),sw(784,'#ffaa00','border:1px solid #e8b860'),
  item(850,100,239,'EDIFICACION'),sw(878,'#686868','border:1px solid #888'),
  [919,969,[I(40,'tri_open'),[59,460,`<div class="sel">${S(61,0,[[0,46,[K(62,1,'round'),T(100,217,'MANZANA','','',.5)]]])}</div>`]]],
  sw(973,'#c5c5b8','border:2px solid #000'),
  item(1039,100,195,'VEREDA1'),sw(1067,'#fff','border:3px solid #000'),
  [1109,1157,[I(46,'tri_shut'),K(62,0,'round'),T(100,393,'Vereda_TerrenoPredio_2013')]],
  [1157,1205,[I(46,'tri_shut'),K(62,0,'round'),T(100,310,'TerrenoPredio_2013','','',.5)]],
  [1205,1253,[K(62,0,'round'),T(100,232,'Topographic','','',.5)]],
  [1257,1297,[I(40,'tri_open'),T(62,258,'Standalone Tables','sb','',-.5)]],
  tb(1325,307,'IGAC2009Registro1'),tb(1371,495,'IGAC2009Registro1_IndConstGeneral'),tb(1417,491,'IGAC2009Registro1_IndOcupGeneral'),
  [1444,1484,[T(85,156,'Charts','b','',-.5)]],
  [1492,1532,[I(84,'hist',-2),T(137,427,'Distribution of FREQUENCY','','',-.5)]],
  tb(1559,414,'Construccion_2013_Manzana')])});

define('map-canvas',`svg{display:block}text{font-family:"Noto Sans","Open Sans",sans-serif;font-size:29px;fill:#000;stroke:#fff;stroke-width:5px;stroke-linejoin:round;paint-order:stroke;text-anchor:middle}.p{fill:#c5c5b8}.k{fill:#000}`,()=>{
 const L=(x,y,r,a,b,c,px,cx)=>{const t=(dx,dy,s,w)=>`<text transform="translate(${dx} ${dy}) rotate(${r})" y="10.5" textLength="${w}" lengthAdjust="spacingAndGlyphs">${s}</text>`;
  return t(x,y,a,209)+t(px[0],px[1],b,219)+t(cx[0],cx[1],c,c.length>10?174:156)};
 return `<svg width="1814" height="843" viewBox="537 367 1814 843"><rect x="537" y="367" width="1814" height="843" fill="#fff"/>
 <path class="p" stroke="#000" stroke-width="4" d="M1212 355L1201.500 460L1802 539L1823 355ZM2003 355L1959.600 558.600L2351 609V355Z"/>
 <path class="k" d="M1258.400 360V367L1252.400 425.600L1384.300 440.800L1383 450.200L1770.400 499.200L1785 360ZM2036 360L2005.500 531L2304.800 565.900L2298 599L2351 609.400V360Z"/>
 <path class="p" d="M2347 360L2328.700 451.400L2351 454V360Z"/>
 <g transform="translate(530 310) scale(.59949 .58673)">
  <path class="p" stroke="#000" stroke-width="7" d="M0 80H602L593 157L541 219L0 143Z"/>
  <path class="k" d="M12 429L1303 611L1294 675H1281L1286 690L1294 692L1281 764H1272L1262 838L1269 840L1256 940L1245 938L1238 985L1225 975L292 852V862L192 848V836L12 812Z"/>
  <path class="p" d="M304 752L355 760L348 832L296 827ZM605 796L806 823L794 912L595 884ZM12 624L20 626L15 665H12Z"/>
  <path d="M12 813L192 836M292 852L1232 985M1238 982L1245 938M1256 840L1266 766" fill="none" stroke="#2df3f3" stroke-width="8"/>
  <path d="M1286 676L1284 690" fill="none" stroke="#2df3f3" stroke-width="16"/>
  <path d="M0 442.500L1287 624L1232 980L0 806" fill="none" stroke="#00bfbf" stroke-width="15" stroke-linejoin="round"/>
  <path class="k" d="M12 961L268 1003L221 1308H210L175 1534V1540H12ZM470 1049L844 1110L846 1097L951 1115L949 1129L1047 1144L1049 1131L1222 1159L1153 1540H384L390 1489H404Z"/>
  <path class="p" d="M12 1437L179 1460L168 1540H12ZM768 1104L843 1117L832 1196L757 1182ZM674 1245L874 1280L862 1360L853 1420L886 1428L876 1502L666 1462L676 1395L660 1390Z"/>
 </g>
 <path class="k" d="M1400 1010L1738.600 1055L1739.800 1050L1852.400 1065L1851 1070L1968.800 1086L1970 1079L2191.600 1109L2192.800 1106.500L2309.800 1121.800L2297.500 1205L2287 1207.500V1212H1361L1370.500 1161.300H1376.500Z"/>
 <g transform="translate(1400 310) scale(.61224)">
  <path class="k" d="M82 626L630 702V696L727 710V717L1553 835L1491 1199L1068 1141V1132L970 1118V1131L763 1103V1090L676 1078V1087L480 1062V1044L10 977Z"/>
  <path class="p" d="M374 968L489 984L483 1045L366 1028ZM1084 1021L1144 1031L1134 1116L1072 1106ZM264 1432L324 1441L320 1476H257ZM423 1378L494 1385L491 1437L528 1441L523 1476H410ZM714 1445L823 1458L821 1476H710Z"/>
  <path d="M22 982L480 1049M676 1082L763 1094M970 1124L1068 1137" stroke="#2df3f3" stroke-width="8"/>
  <path d="M25 978L77 710C83 672 106 645 137 648L1455 832C1500 838 1530 862 1526 908L1480 1190Z" fill="none" stroke="#00bfbf" stroke-width="15" stroke-linejoin="round"/>
 </g>`
 +L(780,384,0,'2589901000224','IndOcup: 0.1468','(14.6788%)',[780,419.500],[780,455])
 +L(915,694,7.500,'2589901000221','IndOcup: 1.0397','(103.9695%)',[911,729],[905,766])
 +L(1006.500,1050,8,'2589901000220','IndOcup: 0.9665','(96.6508%)',[1000.500,1086],[995,1123])
 +L(1542.500,400,7.500,'2589901000222','IndOcup: 0.7214','(72.1445%)',[1539,436],[1534.500,473])
 +L(2171.500,442,0,'2589901000199','IndOcup: 0.7543','(75.4291%)',[2171.500,478],[2171.500,514])
 +L(1883.500,835.500,7.500,'2589901000200','IndOcup: 1.1443','(114.4285%)',[1879,870],[1873,908])
 +L(1774,1103,7,'2589901000201','IndOcup: 0.7998','(79.9809%)',[1770.500,1138],[1766,1174])
 +`</svg>`});

const TABCSS=`.tab{height:44px;background:#d2d3d8;border-radius:8px 8px 0 0}.strip{height:6px;background:#d2d3d8}`;
define('map-view',`:host{width:1819px;height:943px}${TABCSS}.body{border:solid #d2d3d8;border-width:0 2px 2px 3px;height:893px;background:#f7f9f9}.on{height:40px;background:#9ccbee;border:2px solid #10649c;display:flex;align-items:center;justify-content:center}.w{height:40px;background:#fff}`,()=>
 S(534,317,[[317,361,[[534,217,`<div class="tab">${S(534,0,[[0,50,[I(547,'map'),T(589,699,'LandIndex','','',.5),I(718,'x',-1,'color:#666')]]])}</div>`],I(2328,'chev',2)]],[361,367,[[534,1819,'<div class="strip"></div>']]]])
 +`<div class="body"><map-canvas></map-canvas>${S(537,1210,[[1212,1256,[C(547,747,43,561,616,'1:497','tri',727),V(757,30,'#999'),[765,40,'<div class="on"><ui-icon name="snap"></ui-icon></div>',-2],I(811,'grid',-2),I(849,'inf',-1),I(889,'cross',-1),I(928,'north',-1),I(975,'chev',1,'color:#111'),V(1009,30,'#999'),
  T(1276,1571,'73.9981665°W 5.0328598°N','','',3.5),I(1594,'chev',2,'color:#333'),V(1881,30,'#999'),[1889,278,`<div class="w">${S(1889,0,[[0,40,[I(1895,'zsel',1),T(1937,2161,'Selected Features: 19','','',.5)]]])}</div>`],V(2176,30,'#999'),I(2195,'box',2),V(2238,30,'#999'),I(2255,'pp'),V(2296,30,'#999'),I(2309,'refresh')]]])}</div>`);

define('data-grid',`:host{height:328px;overflow:hidden;font-size:24.500px;display:flex;flex-direction:column}
.row{display:grid;grid-template-columns:68px 320px 182px 148px 161px 115px 320px 320px 131px;flex:none}
.h{height:56px;font-weight:700;background:#ebebeb;font-size:24px}
.c{display:flex;align-items:center;border-right:2px solid #c6c6c8;border-bottom:2px solid #c6c6c8;padding-left:9px;overflow:hidden}
.h .c{border-bottom:0}.row .c:last-child{border-right:0}
.n{justify-content:flex-end;padding:0 10px 0 0}
.dk{border-right-color:#8a8a8a!important}
.body{height:272px;overflow:hidden;flex:none}.body .row{height:56.400px}.body .row:first-child{margin-top:-25.500px}
.body fit-text{margin-top:2px}
.y .c:not(:first-child){background:#8cffff}.row .c:first-child{background:#ebebeb;padding-left:10px}
.h .c:first-child{background:#fff}
.z .c{background:#fff}`,()=>{
 const H=`<div class="row h"><div class="c" style="justify-content:flex-end"><ui-icon name="corner" style="margin:18px 6px 0 0"></ui-icon></div><div class="c">${F(288,'Codigo Identificacion...')}</div><div class="c">${F(160,'AreaOcupm2')}</div><div class="c dk" style="background:#c6e1f6;border-bottom:5px solid #0079ca;padding-top:5px">${F(106,'IndOcup')}<ui-icon name="sort" style="margin:-4px 0 0 8px"></ui-icon></div><div class="c">${F(141,'OBJECTID *')}</div><div class="c">${F(95,'Shape *')}</div><div class="c">${F(287,'Código Identificacion...')}</div><div class="c">${F(185,'Tipo de Avaluo')}</div><div class="c">${F(98,'Reporte')}</div></div>`;
 const row=(k,a,b,c,o,y,extra)=>`<div class="row ${y?'y':''}"><div class="c" style="${extra?'background:#c9e1f6;border-right:4px solid #0079ca':''}">${F(27,k)}</div><div class="c">${F(184,a)}</div><div class="c n">${F(b.length*14.040-8,b)}</div><div class="c n dk" style="${extra?'background:#c9e1f6':''}">${F(c.length*14.040-9,c)}</div><div class="c">${F(42,o)}</div><div class="c">${F(93,'Polygon')}</div><div class="c">${F(126,'258990100')}</div><div class="c">${F(27,'01')}</div><div class="c" style="padding-left:12px">${F(78,'<Null>')}</div></div>`;
 return H+'<div class="body">'+row('16','2589901000407','718.707924','1.011046','110',1)+row('17','2589901000540','1356.52998','1.00738','228',1)+row('18','2589901000709','229.707406','1.001302','319',1)+row('19','2589901000706','227.993996','1.001302','690',1,1)+row('20','2589901000075','446.554915','1.001296','667',0)+`<div class="row z">${'<div class="c"></div>'.repeat(3)}<div class="c dk"></div>${'<div class="c"></div>'.repeat(5)}</div></div>`});

define('table-view',`:host{width:1819px;height:540px}${TABCSS}
.body{border:solid #d2d3d8;border-width:0 2px 2px 2px;height:490px;background:#f7f9f9}
.tool{height:59px;border:2px solid #b9bbc2;background:#eff0f3}
.grid{height:373px;border:2px solid #c5c7cc;background:#ebebeb;display:flex;flex-direction:column}
.top{display:flex;height:328px}.top data-grid{width:1765px;flex:none}
.on{height:44px;border:2px solid #3ba8ec;background:#bfc1c6;display:flex;align-items:center;justify-content:center}.gr{height:47px;background:#eceef2}.w{height:44px;background:#fff}`,()=>
 S(534,1272,[[1272,1316,[[534,225,`<div class="tab">${S(534,0,[[0,50,[I(547,'tableb',-2),T(590,705,'MANZANA'),I(725,'x',-1,'color:#666')]]])}</div>`],I(2328,'chev',1)]],[1316,1322,[[534,1819,'<div class="strip"></div>']]]])
 +`<div class="body">${S(536,1322,[
  [1325,1384,[[539,1810,`<div class="tool">${S(541,1327,[[1327,1382,[T(552,611,'Field:','b','',.5),I(628,'fadd'),T(667,708,'Add','','',.5),I(729,'fcalc'),T(767,864,'Calculate','','',.5),V(885,44,'#c4c6cc'),T(901,1010,'Selection:','b','',.5),I(1027,'sba'),T(1066,1273,'Select By Attributes','','',.5),I(1293,'zt'),T(1331,1426,'Zoom To','','',.5),I(1446,'sw'),T(1485,1552,'Switch','','',.5),I(1573,'cl',-1),T(1612,1665,'Clear','','',.5),I(1685,'del'),T(1725,1793,'Delete','','',.5),I(1813,'cp'),T(1852,1906,'Copy','','',.5),I(2305,'ham',-2)]]])}</div>`]]],
  [1386,1759,[[539,1810,`<div class="grid"><div class="top"><data-grid></data-grid>${S(2306,1388,[[1404,1414,[I(2319,'up')]],[1438,1488,[[2317,20,'<div style="height:50px;border-radius:10px;background:#b4b4b4"></div>']]],[1690,1700,[I(2319,'chev')]]])}</div>${S(541,1716,[[1725,1747,[I(557,'left'),[582,1262,'<div style="height:22px;border-radius:11px;background:#b4b4b4"></div>'],I(2281,'right')]]])}</div>`]]],
  [1762,1809,[[539,64,'<div class="on"><ui-icon name="all"></ui-icon></div>'],I(623,'sel',-3),I(689,'first',-1),I(734,'last',-1),T(781,974,'19 of 711 selected','','',2),T(1620,1687,'Filters:','','',2),
   [1697,84,`<div class="gr">${S(1697,0,[[0,46,[I(1705,'clock'),I(1747,'range')]]])}</div>`],I(1790,'fsel'),V(1827,30,'#999'),I(1841,'ud',-1),I(1889,'minus'),I(1917,'slider'),I(2130,'plus'),
   [2161,120,`<div class="w">${S(2161,0,[[0,44,[T(2175,2239,'119 %','k','',1.5),I(2261,'tri')]]])}</div>`],V(2293,30,'#999'),I(2307,'refresh')]]])}</div>`);

define('arcade-editor',`:host{height:316px;border:2px solid #979797;background:#fff;font-family:"DejaVu Sans Mono","Liberation Mono",monospace;font-size:21.520px;display:flex;justify-content:space-between;color:#111}
.l{height:32.300px;line-height:32px;white-space:pre}.l>span{display:inline-block;height:32.300px;background:#99c8ef}.l+.l{padding-left:26px}
.f{color:#008000}.s{color:#f00;display:inline}.o{color:#808080}.r{color:#9bb955;display:inline}.p{color:#00f}.n{color:#800000}.w{padding:10px 2px 0 0;display:flex;flex-direction:column;gap:18px}`,()=>{
 const c=(k,t)=>`<b class="${k}" style="font-weight:400">${esc(t)}</b>`;
 return `<div><div class="l"><span style="border-left:2px solid #000;text-indent:-2px">${c('f','$feature')}.codigo ${c('o','+')} ${c('s','"\\nIndOcup: "')} ${c('o','+')} ${c('r','round')}</span></div>
<div class="l"><span>${c('p','(')}${c('f','$feature')}.IndOcup, ${c('n','4')}${c('p',')')} ${c('o','+')} ${c('s','" ("')} ${c('o','+')} ${c('r','round')}</span></div>
<div class="l"><span>${c('p','(')}${c('f','$feature')}.IndOcup${c('o','*')}${c('n','100')}, ${c('n','4')}${c('p',')')} ${c('o','+')} ${c('s','"%)"')} </span></div></div>
<div class="w"><ui-icon name="wrap"></ui-icon><ui-icon name="wrap"></ui-icon></div>`});

define('label-pane',`:host{width:696px;height:1498px}
.pane{height:1458px;background:#f7f9f9;border:2px solid #0079c4;border-radius:8px 8px 0 0}
.in{height:50px;background:#fff;border:2px solid #979797}
.list{height:200px;background:#fff;border:2px solid #bcbec2;display:flex;justify-content:space-between;overflow:hidden}.bar{width:34px;background:#ebebeb}
.btn{height:49px;border:2px solid #b6b6b6}.lt{height:42px;background:#f7f9f9;border:2px solid #0079c4;border-top:0;border-radius:0 0 8px 8px}`,()=>{
 const list=(x,items,y0,t0,t1)=>`<div class="list">${S(x+2,795,items.map(([w,t],i)=>[y0+i*40.250-20,y0+i*40.250+20,[T(x+13,x+13+w,t,'k','',-.5)]]))}<div class="bar">${S(x+285,795,[[806,816,[I(x+293,'up',0,'color:#666')]],[t0,t1,[[x+291,18,`<div style="height:${t1-t0}px;border-radius:9px;background:#b4b4b4"></div>`]]],[967,977,[I(x+293,'chev',0,'color:#666')]]])}</div></div>`;
 return `<div class="pane">${S(2367,319,[
  [330,374,[T(2381,2723,'Label Class - MANZANA','','color:#0079c4;font-size:30.500px',-1),I(2955,'chev',-2),I(2992,'pin',-4),I(3025,'x',-3)]],
  [380,420,[T(2642,2729,'Class 1','','font-size:27px',-1),I(3013,'ham',-2)]],
  [436,477,[T(2382,2439,'Class','sb','font-size:24.500px'),I(2456,'chev',4,'color:#111'),T(2505,2587,'Symbol','','font-size:24.500px'),T(2610,2698,'Position','','font-size:24.500px')]],
  [477,481,[[2381,59,'<div style="height:4px;background:#0079ca"></div>']]],
  [504,554,[I(2393,'exprb',2),I(2457,'sqlb'),I(2520,'tagtab',1)]],
  [565,571,[[2383,64,'<div style="height:6px;background:#0079ca"></div>'],[2447,128,'<div style="height:2px;background:#cbcbcb"></div>',2]]],
  [597,641,[T(2390,2492,'Language','k','',1.5),C(2505,2705,44,2512,2583,'Arcade','tri',2685)]],
  [661,711,[T(2390,2434,'Title','','',1.5),[2505,200,`<div class="in">${S(2507,0,[[0,46,[T(2516,2596,'Custom','k','',1.5)]]])}</div>`]]],
  [737,781,[T(2390,2449,'Fields','k'),I(2674,'funnel',-2),T(2720,2820,'Functions','k'),I(3003,'funnel',-2)]],
  [793,993,[[2389,319,list(2389,[[270,'Código Identificacion Sec'],[159,'Tipo de Avaluo'],[81,'Reporte'],[148,'Shape_Length'],[122,'Shape_Area']],811,891,952)],[2718,319,list(2718,[[51,'Abs()'],[62,'Acos()'],[74,'Angle()'],[53,'Any()'],[60,'Area()']],817,833,875)]]],
  [1002,1046,[C(2389,2708,44,2402,2534,'Insert Values','tri',2688,'','background:#eff0f3;border-color:#bcbec2;color:#8a8a8a',.5)]],
  [1046,1088,[T(2390,2500,'Expression','k')]],
  [1092,1408,[[2389,648,'<arcade-editor></arcade-editor>']]],
  [1423,1455,[I(2755,'revert'),I(2832,'ok'),I(2907,'folder',1),I(2983,'go')]],
  [1478,1524,[K(2379,1,'',-1),T(2415,2948,'Insert fields with coded value description function','','',.5)]],
  [1526,1572,[K(2379,1,'',-1),T(2415,2637,'Remove extra spaces','','',.5)]],
  [1574,1620,[K(2379,0,'',-1),T(2415,2681,'Remove extra line breaks','','',.5)]],
  [1624,1664,[T(2380,2757,'Learn more about label expressions','','color:#0063a3',-.5)]],
  [1717,1766,[[2763,140,`<div class="btn">${S(2765,0,[[0,47,[T(2804,2864,'Apply','','color:#c9c9c9')]]])}</div>`],[2919,140,`<div class="btn">${S(2921,0,[[0,47,[T(2954,3022,'Cancel','','color:#c9c9c9')]]])}</div>`]]]
 ])}</div><div style="margin-top:-2px">${S(2365,1773,[[1773,1815,[T(2378,2457,'Catalog','','',-.5),T(2484,2565,'Geopr...','','',-.5),T(2606,2695,'Symbo...','','',-.5),T(2722,2815,'Modify...','','',-.5),[2827,116,`<div class="lt">${S(2829,0,[[0,41,[T(2840,2912,'Label...','','color:#0079c4')]]])}</div>`],T(2956,3029,'Chart...','','',-.5)]]])}</div>`});

define('app-window',`:host{width:3072px;height:1838px;display:flex;flex-direction:column;background:#ebebeb}
.top{background:#f7f9f9;height:305px;flex:none}.top ribbon-bar{height:192px}
.main{display:flex;align-items:flex-start;height:1520px;padding:12px 0 0 12px;flex:none}
.mid{display:flex;flex-direction:column;gap:12px;margin:0 12px 0 11px}
.foot{height:13px;border-top:2px solid #bfc0c2;background:#f0f0f0;display:flex;align-items:flex-end}
.lip{margin-left:1410px;width:76px;height:3px;border:2px solid #e2e2e2;border-bottom:0;border-radius:5px 5px 0 0;background:#fafafa}`,()=>
 `<div class="top"><title-bar></title-bar><ribbon-tabs></ribbon-tabs><ribbon-bar></ribbon-bar></div>
 <div class="main"><contents-pane></contents-pane><div class="mid"><map-view></map-view><table-view></table-view></div><label-pane></label-pane></div>
 <div class="foot"><div class="lip"></div></div>`);
</script>
</body>
</html>
